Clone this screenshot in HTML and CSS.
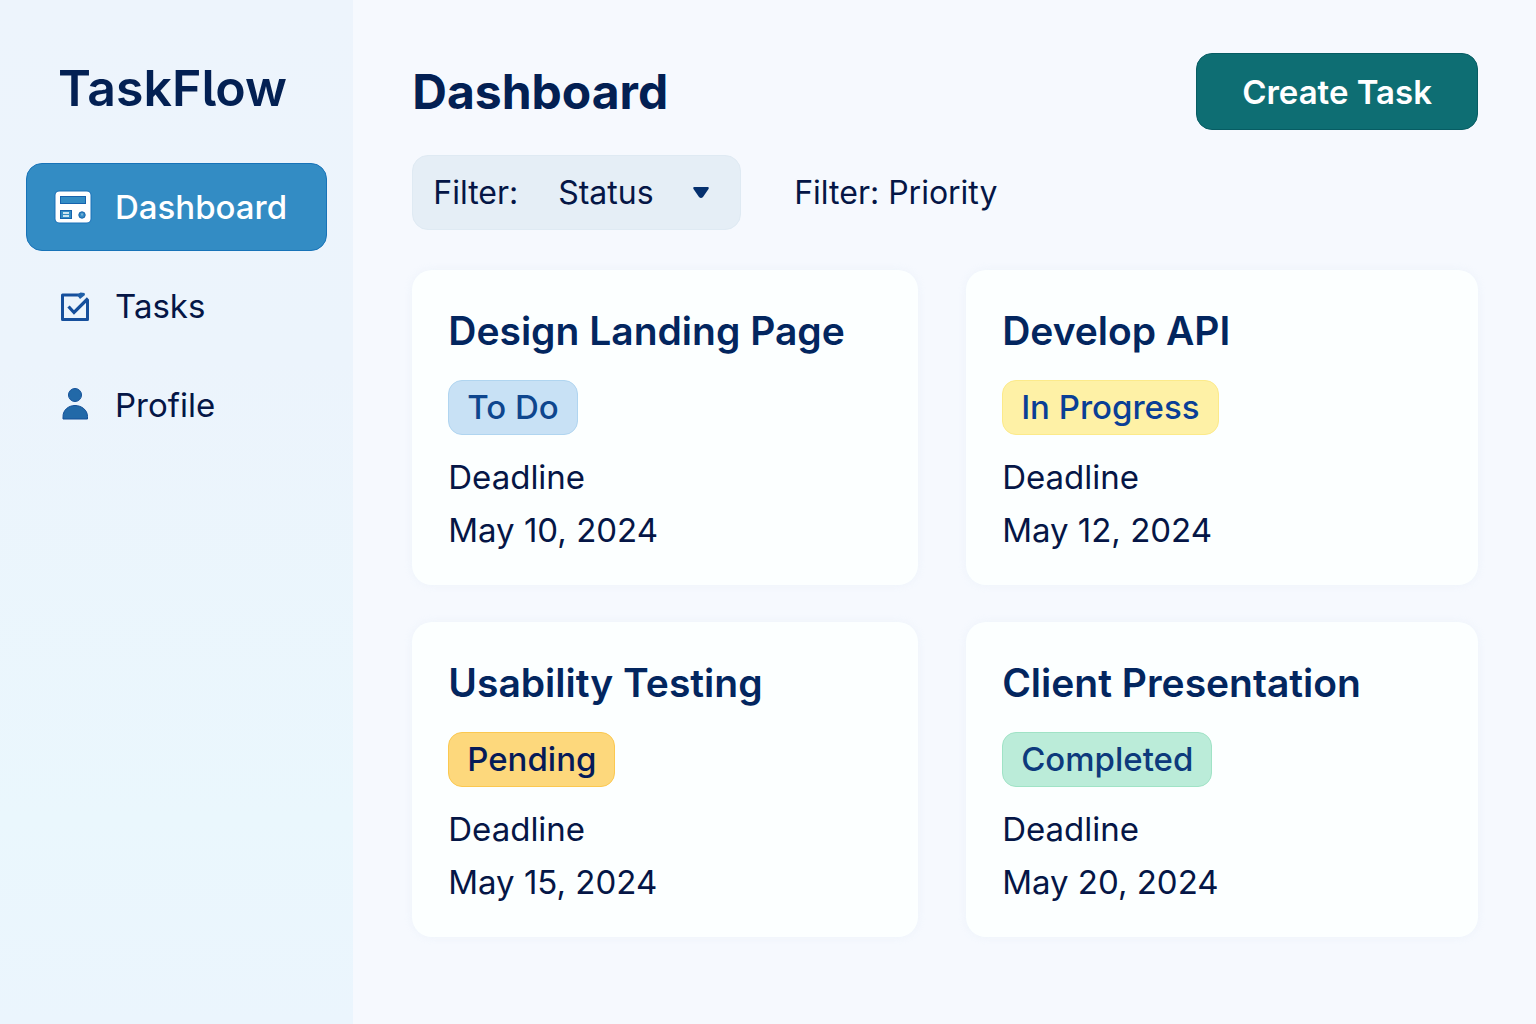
FILE: index.html
```html
<!DOCTYPE html>
<html lang="en">
<head>
<meta charset="utf-8">
<meta name="viewport" content="width=device-width, initial-scale=1">
<title>TaskFlow</title>
<link rel="stylesheet" href="styles.css">
</head>
<body>
<div class="app">
  <aside class="sidebar">
    <div class="brand">TaskFlow</div>
    <nav class="nav">
      <a class="nav-item nav-item-active" href="#dashboard" aria-current="page">
        <svg class="nav-icon" viewBox="0 0 38 34" aria-hidden="true">
          <rect x="0.5" y="0.5" width="37" height="33" rx="5" fill="#1b70b8"/>
          <rect x="1.5" y="1.5" width="35" height="31" rx="4" fill="#fff"/>
          <rect x="6.500" y="6.500" width="25" height="7" fill="#338cc4" stroke="#1663ad"/>
          <rect x="6.500" y="20.500" width="11" height="8" fill="#338cc4" stroke="#1663ad"/>
          <path d="M9 23h6M9 26h6" stroke="#fff" stroke-width="1.400"/>
          <circle cx="28" cy="25" r="3.200" fill="#338cc4" stroke="#1663ad"/>
          <path d="M28 23.500v2" stroke="#9fc8e6" stroke-width="1.200"/>
        </svg>
        <span>Dashboard</span>
      </a>
      <a class="nav-item" href="#tasks">
        <svg class="nav-icon" viewBox="0 0 38 34" aria-hidden="true" fill="none" stroke="#164f9c" stroke-width="3">
          <path d="M27 6H8.500v24.500h25V11" stroke-linejoin="round"/>
          <path d="M14.500 17.500l5.500 6L34 9.500" stroke-width="3.200"/>
          <path d="M23 6l3.500-2.500 4 0.500 0.500 2-5 4z" fill="#1f5fa8" stroke="none"/>
        </svg>
        <span>Tasks</span>
      </a>
      <a class="nav-item" href="#profile">
        <svg class="nav-icon" viewBox="0 0 38 34" aria-hidden="true" fill="#2269a8" stroke="#124f98">
          <circle cx="21" cy="7" r="6.500"/>
          <path d="M9 31v-2.500c0-6.500 5.500-11 12-11s12.500 4.500 12.500 11V31z" stroke-linejoin="round"/>
        </svg>
        <span>Profile</span>
      </a>
    </nav>
  </aside>

  <main class="main">
    <header class="header">
      <h1 class="page-title">Dashboard</h1>
      <button class="create" type="button">Create Task</button>
    </header>

    <div class="filters">
      <div class="filter">
        <label for="status">Filter:</label>
        <select class="filter-select" id="status">
          <option>Status</option>
        </select>
        <svg class="caret" viewBox="0 0 18 12" aria-hidden="true"><path d="M2 0h14q1.500 0.500 0.500 2L11 10q-2 2-4 0L1.500 2q-1-1.500 0.500-2z" fill="#05306e"/></svg>
      </div>
      <button class="filter-plain" type="button">Filter: Priority</button>
    </div>

    <section class="cards" aria-label="Tasks">
      <article class="card">
        <h2 class="card-title">Design Landing Page</h2>
        <span class="badge badge-todo">To Do</span>
        <p class="meta">Deadline</p>
        <p class="meta"><time datetime="2024-05-10">May 10, 2024</time></p>
      </article>
      <article class="card">
        <h2 class="card-title">Develop API</h2>
        <span class="badge badge-progress">In Progress</span>
        <p class="meta">Deadline</p>
        <p class="meta"><time datetime="2024-05-12">May 12, 2024</time></p>
      </article>
      <article class="card">
        <h2 class="card-title">Usability Testing</h2>
        <span class="badge badge-pending">Pending</span>
        <p class="meta">Deadline</p>
        <p class="meta"><time datetime="2024-05-15">May 15, 2024</time></p>
      </article>
      <article class="card">
        <h2 class="card-title">Client Presentation</h2>
        <span class="badge badge-completed">Completed</span>
        <p class="meta">Deadline</p>
        <p class="meta"><time datetime="2024-05-20">May 20, 2024</time></p>
      </article>
    </section>
  </main>
</div>
</body>
</html>
```
FILE: styles.css
```css
*, *::before, *::after { box-sizing: border-box; }

body {
  margin: 0;
  font-family: Inter, "Liberation Sans", sans-serif;
  font-size: 33px;
  color: #051646;
  background: #f6f9fe;
}

h1, h2, p { margin: 0; }

button, select {
  font: inherit;
  color: inherit;
  border: 0;
  background: none;
  padding: 0;
  cursor: pointer;
}

.app {
  display: grid;
  grid-template-columns: 23% 1fr;
  min-height: 100vh;
}

.sidebar {
  padding: 56px 26px;
  background: linear-gradient(180deg, #edf4fc 0%, #ecf4fc 35%, #eaf7fd 80%, #ebf5fd 100%);
}

.brand {
  padding-left: 32px;
  font-size: 50px;
  font-weight: 600;
  line-height: 64px;
  color: #032053;
  font-feature-settings: "cv05";
}

.nav {
  display: flex;
  flex-direction: column;
  gap: 11px;
  margin-top: 43px;
}

.nav-item {
  display: flex;
  align-items: center;
  gap: 23px;
  height: 88px;
  padding: 0 27px;
  border: 1px solid transparent;
  border-radius: 16px;
  color: inherit;
  text-decoration: none;
}

.nav-item-active {
  background: #338cc4;
  border-color: #1873b8;
  color: #fff;
  font-weight: 500;
}

.nav-icon {
  flex: none;
  width: 38px;
  height: 34px;
}

.main { padding: 53px 58px 53px 59px; }

.header {
  display: flex;
  align-items: center;
  justify-content: space-between;
}

.page-title {
  font-size: 48px;
  font-weight: 700;
  line-height: 64px;
  color: #032053;
}

.create {
  height: 77px;
  padding: 0 45px;
  border: 1px solid #075c63;
  border-radius: 16px;
  background: #0e6e73;
  color: #fff;
  font-weight: 600;
}

.filters {
  display: flex;
  align-items: center;
  gap: 53px;
  margin-top: 25px;
  font-size: 32px;
}

.filter {
  position: relative;
  display: flex;
  align-items: center;
  gap: 40px;
  height: 75px;
  padding: 0 30px 0 20px;
  border: 1px solid #dfeaf3;
  border-radius: 16px;
  background: #e5eef6;
}

.filter-select {
  appearance: none;
  width: 152px;
}

.caret {
  position: absolute;
  right: 30px;
  width: 18px;
  height: 12px;
  pointer-events: none;
}

.cards {
  display: grid;
  grid-template-columns: 506fr 512fr;
  gap: 37px 48px;
  margin-top: 40px;
}

.card {
  display: flex;
  flex-direction: column;
  align-items: flex-start;
  padding: 36px 36px 28px;
  border-radius: 20px;
  background: #fcffff;
  box-shadow: 0 0 8px rgba(225, 234, 246, 0.4);
}

.card-title {
  font-size: 39px;
  font-weight: 600;
  line-height: 50px;
  color: #03265f;
}

.badge {
  margin: 24px 0 16px;
  padding: 0 18px;
  border: 1px solid;
  border-radius: 14px;
  font-weight: 500;
  line-height: 53px;
}

.badge-todo { background: #c8e1f5; border-color: #b0d5f0; color: #0e468e; }
.badge-progress { background: #fef1a6; border-color: #fcea8a; color: #0a3f96; }
.badge-pending { background: #fdd87c; border-color: #fbc850; color: #051a58; }
.badge-completed { background: #bbecd9; border-color: #a0e3c6; color: #0d3a7c; }

.meta { line-height: 53px; }
```
